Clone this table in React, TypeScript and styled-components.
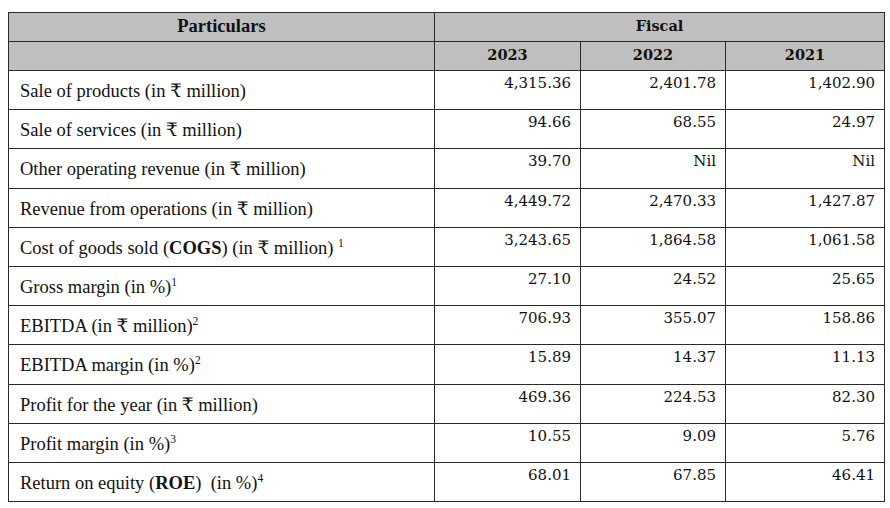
import type { ReactNode } from 'react'
import styled, { createGlobalStyle } from 'styled-components'

const Sup = styled.sup`
  font-size: 11.5px;
  vertical-align: 7px;
  line-height: 0;
`

type Row = {
  label: ReactNode
  values: [string, string, string]
}

const rows: Row[] = [
  { label: <>Sale of products (in ₹ million)</>, values: ['4,315.36', '2,401.78', '1,402.90'] },
  { label: <>Sale of services (in ₹ million)</>, values: ['94.66', '68.55', '24.97'] },
  { label: <>Other operating revenue (in ₹ million)</>, values: ['39.70', 'Nil', 'Nil'] },
  { label: <>Revenue from operations (in ₹ million)</>, values: ['4,449.72', '2,470.33', '1,427.87'] },
  {
    label: (
      <>
        Cost of goods sold (<b>COGS</b>) (in ₹ million) <Sup>1</Sup>
      </>
    ),
    values: ['3,243.65', '1,864.58', '1,061.58'],
  },
  {
    label: (
      <>
        Gross margin (in %)<Sup>1</Sup>
      </>
    ),
    values: ['27.10', '24.52', '25.65'],
  },
  {
    label: (
      <>
        EBITDA (in ₹ million)<Sup>2</Sup>
      </>
    ),
    values: ['706.93', '355.07', '158.86'],
  },
  {
    label: (
      <>
        EBITDA margin (in %)<Sup>2</Sup>
      </>
    ),
    values: ['15.89', '14.37', '11.13'],
  },
  { label: <>Profit for the year (in ₹ million)</>, values: ['469.36', '224.53', '82.30'] },
  {
    label: (
      <>
        Profit margin (in %)<Sup>3</Sup>
      </>
    ),
    values: ['10.55', '9.09', '5.76'],
  },
  {
    label: (
      <>
        Return on equity (<b>ROE</b>)&nbsp; (in %)<Sup>4</Sup>
      </>
    ),
    values: ['68.01', '67.85', '46.41'],
  },
]

const App = () => {
  return (
    <>
      <GlobalStyle />
      <Table>
        <colgroup>
          <col style={{ width: 426 }} />
          <col style={{ width: 146 }} />
          <col style={{ width: 145 }} />
          <col style={{ width: 159 }} />
        </colgroup>
        <thead>
          <HeadRow>
            <HeadCell $serif>Particulars</HeadCell>
            <HeadCell colSpan={3}>Fiscal</HeadCell>
          </HeadRow>
          <HeadRow>
            <HeadCell />
            <HeadCell>2023</HeadCell>
            <HeadCell>2022</HeadCell>
            <HeadCell>2021</HeadCell>
          </HeadRow>
        </thead>
        <tbody>
          {rows.map((row, i) => (
            <BodyRow key={i}>
              <LabelCell>{row.label}</LabelCell>
              {row.values.map((value, j) => (
                <ValueCell key={j}>{value}</ValueCell>
              ))}
            </BodyRow>
          ))}
        </tbody>
      </Table>
    </>
  )
}

const GlobalStyle = createGlobalStyle`
  body {
    margin: 0;
    padding: 12px 0 0 8px;
    background: #ffffff;
    color: #111111;
    font-family: "Liberation Serif", "DejaVu Serif", serif;
  }
`

const Table = styled.table`
  border-collapse: collapse;
  table-layout: fixed;
  width: 877px;
  border: 1px solid #444444;

  td,
  th {
    border: 1px solid #2a2a2a;
  }
`

const HeadRow = styled.tr`
  height: 29px;
`

const BodyRow = styled.tr`
  height: 39.2px;
`

const HeadCell = styled.th<{ $serif?: boolean }>`
  padding: 0 0 3px;
  background: #bfbfbf;
  text-align: center;
  vertical-align: middle;
  line-height: 20px;
  font-family: ${(p) => (p.$serif ? '"Liberation Serif", serif' : '"DejaVu Serif", serif')};
  font-size: ${(p) => (p.$serif ? '18.5px' : '14.5px')};
  font-weight: bold;
  color: #111111;
`

const LabelCell = styled.td`
  padding: 2px 11px 0;
  font-size: 18.5px;
  line-height: 22px;
  vertical-align: middle;
  white-space: nowrap;

  b {
    font-weight: bold;
  }
`

const ValueCell = styled.td`
  padding: 3px 9px 0 0;
  text-align: right;
  vertical-align: top;
  line-height: 18px;
  font-family: "DejaVu Serif", serif;
  font-size: 15px;
`

export default App
